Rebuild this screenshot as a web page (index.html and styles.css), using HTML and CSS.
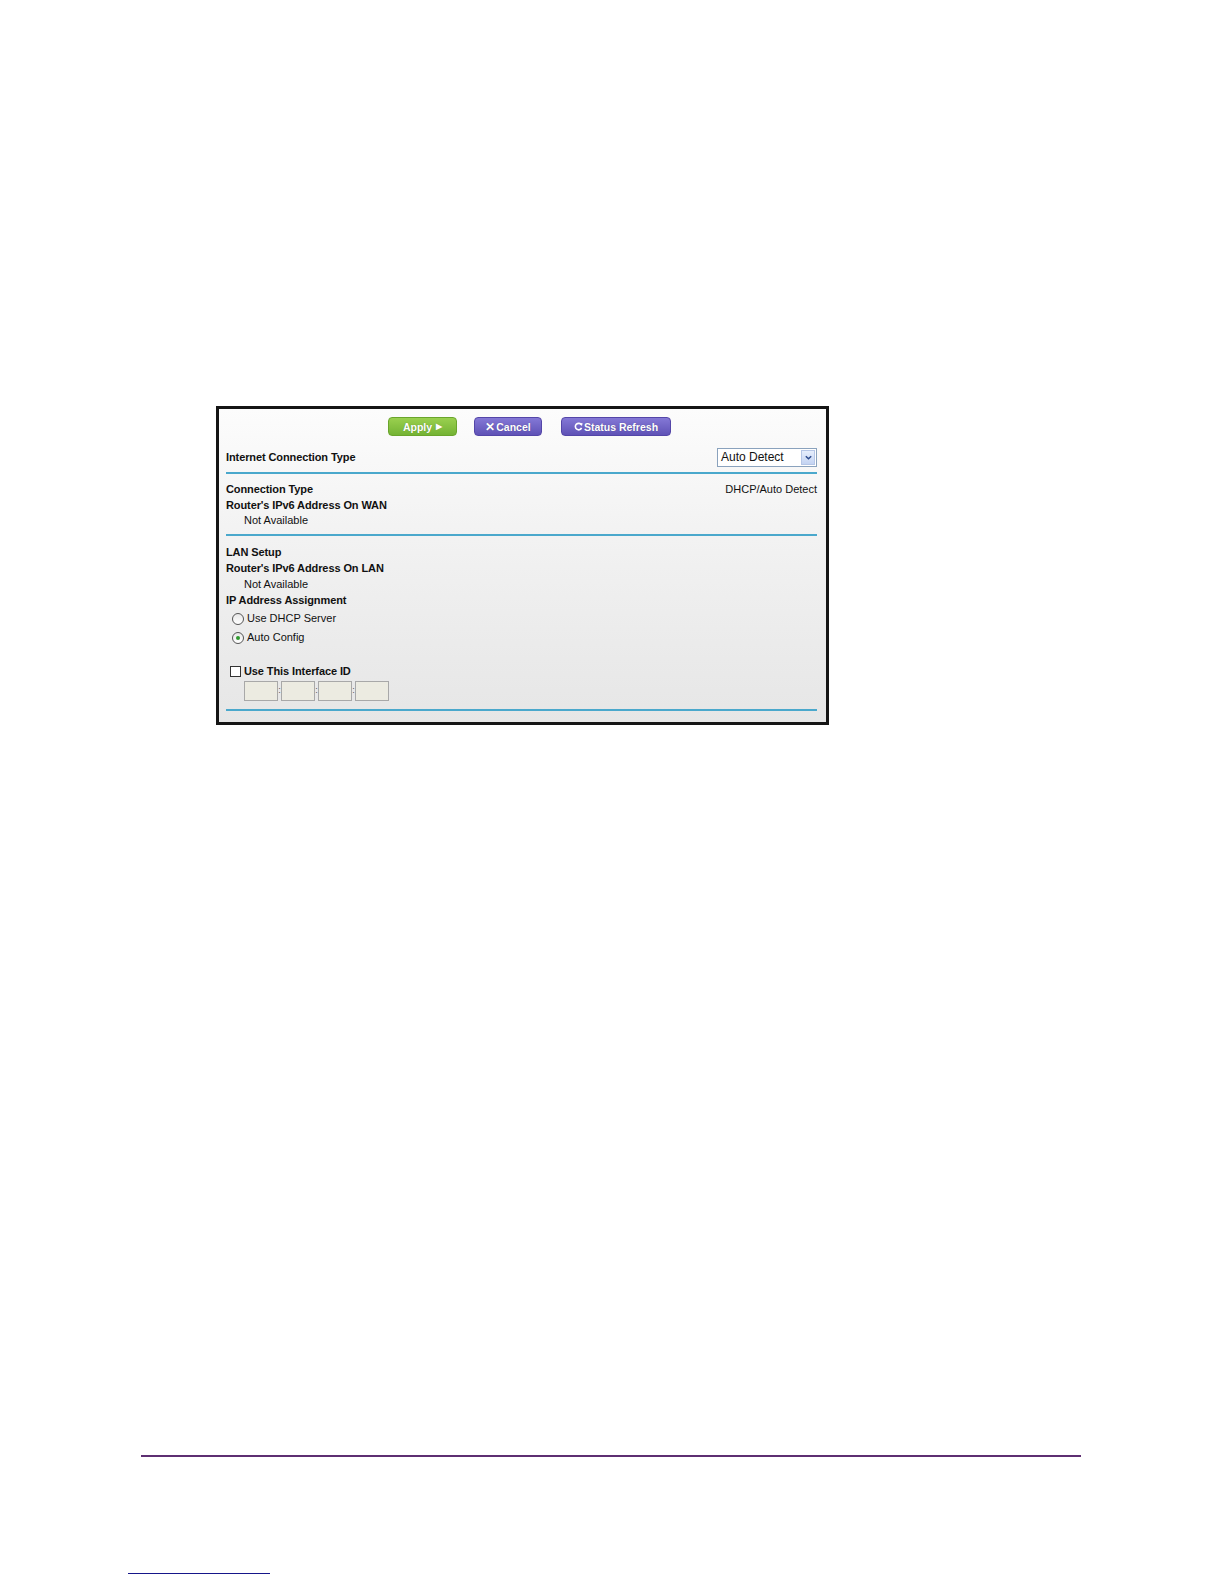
FILE: index.html
```html
<!DOCTYPE html>
<html>
<head>
<meta charset="utf-8">
<link rel="stylesheet" href="styles.css">
</head>
<body>
<div class="page">
  <div class="shot">
    <div class="btnrow">
      <span class="btn green">Apply <span class="tri">&#9654;</span></span>
      <span class="btn purple c1"><span class="x">&#10005;</span>Cancel</span>
      <span class="btn purple c2"><svg class="ref" viewBox="0 0 10 10" width="9" height="9"><path d="M8.2 3.2 A3.6 3.6 0 1 0 8.4 6.6" fill="none" stroke="#fff" stroke-width="1.8"/><path d="M6.4 1.2 L9.6 1.4 L8.8 4.6 Z" fill="#fff"/></svg>Status Refresh</span>
    </div>
    <div class="typerow">
      <span class="b">Internet Connection Type</span>
      <span class="select"><span class="seltext">Auto Detect</span><span class="selbtn"><svg viewBox="0 0 10 10" width="9" height="9"><path d="M2 3.5 L5 6.5 L8 3.5" fill="none" stroke="#2c4a8c" stroke-width="1.6"/></svg></span></span>
    </div>
    <div class="rule"></div>
    <div class="sec s1">
      <div class="row split"><span class="b">Connection Type</span><span>DHCP/Auto Detect</span></div>
      <div class="row b">Router's IPv6 Address On WAN</div>
      <div class="row ind">Not Available</div>
    </div>
    <div class="rule"></div>
    <div class="sec s2">
      <div class="row b">LAN Setup</div>
      <div class="row b">Router's IPv6 Address On LAN</div>
      <div class="row ind">Not Available</div>
      <div class="row b">IP Address Assignment</div>
      <div class="opt first"><span class="radio"></span>Use DHCP Server</div>
      <div class="opt"><span class="radio on"><span class="dot"></span></span>Auto Config</div>
      <div class="chk"><span class="box"></span><span class="b">Use This Interface ID</span></div>
      <div class="ids">
        <span class="idbox"></span><span class="colon">:</span><span class="idbox"></span><span class="colon">:</span><span class="idbox"></span><span class="colon">:</span><span class="idbox"></span>
      </div>
    </div>
    <div class="rule last"></div>
  </div>
  <div class="footline"></div>
  <div class="noteline"></div>
</div>
</body>
</html>
```
FILE: styles.css
```css
html, body {
  margin: 0;
  padding: 0;
  background: #ffffff;
}
.page {
  width: 1224px;
  height: 1584px;
  position: relative;
  font-family: "Liberation Sans", Arial, sans-serif;
  color: #111;
}
.shot {
  position: absolute;
  left: 216px;
  top: 406px;
  border: 3px solid #151515;
  background: linear-gradient(#fcfcfc, #f0f0f0 50%, #e6e6e6);
  padding: 8px 9px 11px 7px;
  box-sizing: content-box;
  width: 591px;
  font-size: 11px;
}
.b { font-weight: bold; letter-spacing: -0.1px; }
.btnrow {
  display: flex;
  padding-left: 162px;
  height: 19px;
}
.btn {
  display: flex;
  align-items: center;
  justify-content: center;
  height: 19px;
  border-radius: 4px;
  color: #fff;
  font-weight: bold;
  font-size: 10.5px;
  text-shadow: 0 0 1px rgba(0,0,0,0.3);
  box-sizing: border-box;
}
.green {
  width: 69px;
  background: linear-gradient(#9ad04f, #74b334);
  border: 1px solid #6aa52c;
}
.tri { font-size: 8px; margin-left: 4px; }
.purple {
  background: linear-gradient(#8478d6, #5f52b6);
  border: 1px solid #5446a8;
}
.c1 { width: 68px; margin-left: 17px; }
.c2 { width: 110px; margin-left: 19px; }
.x { font-size: 12px; margin-right: 1px; }
.ref { margin-right: 1px; }
.typerow {
  display: flex;
  justify-content: space-between;
  align-items: center;
  margin-top: 11px;
  height: 20px;
}
.select {
  display: flex;
  width: 100px;
  height: 19px;
  box-sizing: border-box;
  border: 1px solid #8aa2bd;
  background: #fff;
  align-items: center;
  justify-content: space-between;
  padding: 0 1px 0 3px;
}
.seltext { font-size: 12px; color: #111; }
.selbtn {
  width: 14px;
  height: 15px;
  background: linear-gradient(#e6eefc, #c3d3f2);
  border: 1px solid #b5c6e6;
  box-sizing: border-box;
  display: flex;
  align-items: center;
  justify-content: center;
}
.rule {
  height: 2px;
  background: #4aa8cc;
  margin-top: 5px;
}
.sec { line-height: 15.7px; }
.s1 { padding-top: 8px; padding-bottom: 0; }
.s1 .row { height: 15.5px; line-height: 15.5px; }
.s2 { padding-top: 8px; }
.s2 .row { height: 16px; line-height: 16px; }
.split { display: flex; justify-content: space-between; }
.ind { padding-left: 18px; }
.opt {
  display: flex;
  align-items: center;
  height: 19px;
  padding-left: 6px;
}
.opt.first { margin-top: 2px; }
.radio {
  width: 12px;
  height: 12px;
  box-sizing: border-box;
  border: 1px solid #555;
  border-radius: 50%;
  background: linear-gradient(#e8e8e8, #fff);
  margin-right: 3px;
  display: flex;
  align-items: center;
  justify-content: center;
}
.dot {
  width: 4px;
  height: 4px;
  border-radius: 50%;
  background: #2f9a2f;
}
.chk {
  display: flex;
  align-items: center;
  height: 14px;
  margin-top: 17px;
  padding-left: 4px;
}
.box {
  width: 11px;
  height: 11px;
  box-sizing: border-box;
  border: 1px solid #333;
  background: #fff;
  margin-right: 3px;
}
.ids {
  display: flex;
  align-items: center;
  padding-left: 18px;
  margin-top: 2px;
  height: 20px;
}
.idbox {
  width: 34px;
  height: 20px;
  box-sizing: border-box;
  border: 1px solid #a8a8a8;
  background: #ecebe1;
}
.colon { width: 3px; text-align: center; font-size: 9px; color: #555; }
.rule.last { margin-top: 8px; }
.footline {
  position: absolute;
  left: 141px;
  top: 1455px;
  width: 940px;
  height: 2px;
  background: #5e2f72;
}
.noteline {
  position: absolute;
  left: 128px;
  top: 1573px;
  width: 142px;
  height: 1px;
  background: #16168a;
}
```
